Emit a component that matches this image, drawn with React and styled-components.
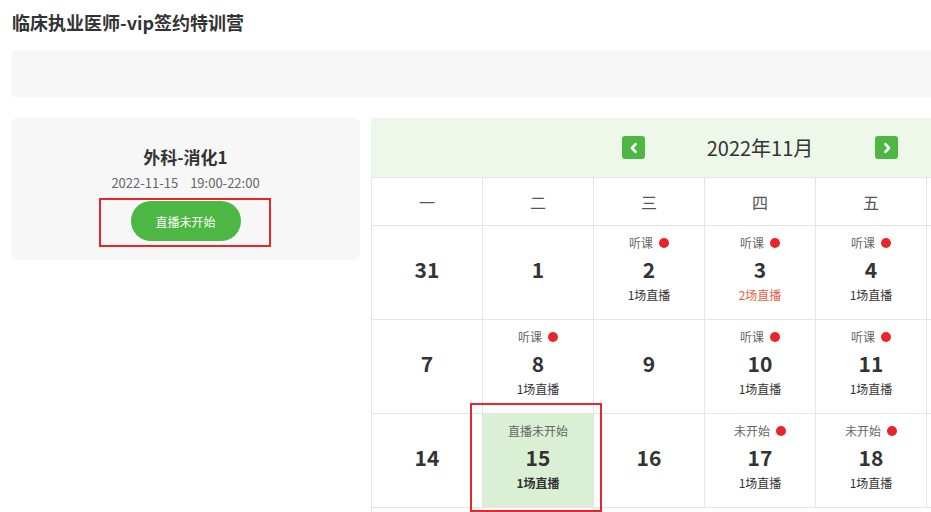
import React from 'react';
import styled, { createGlobalStyle, css } from 'styled-components';

const GlobalStyle = createGlobalStyle`
  html, body {
    margin: 0;
    padding: 0;
    overflow: hidden;
    background: #fff;
  }
  body {
    font-family: "Noto Sans CJK SC", "Noto Sans", sans-serif;
    color: #333;
  }
`;

const Page = styled.div`
  width: 931px;
  height: 512px;
  overflow: hidden;
  padding: 10px 0 0 11px;
  box-sizing: border-box;
`;

const PageTitle = styled.h1`
  margin: 0 0 0 1px;
  font-size: 18px;
  line-height: 24px;
  font-weight: 700;
  color: #333;
`;

const NoticeBar = styled.div`
  margin-top: 16px;
  height: 47px;
  width: 940px;
  background: #f7f7f7;
  border-radius: 5px;
`;

const Main = styled.div`
  display: flex;
  align-items: flex-start;
  gap: 11px;
  margin-top: 21px;
`;

const LiveCard = styled.div`
  flex: none;
  width: 349px;
  height: 142px;
  box-sizing: border-box;
  padding-top: 27px;
  background: #f7f7f7;
  border-radius: 6px;
  display: flex;
  flex-direction: column;
  align-items: center;
`;

const LiveName = styled.div`
  font-size: 17px;
  line-height: 24px;
  font-weight: 700;
  color: #333;
`;

const LiveTime = styled.div`
  margin-top: 5px;
  font-size: 13px;
  line-height: 18px;
  color: #666;

  span + span {
    margin-left: 12px;
  }
`;

const Highlight = styled.div`
  margin: 6px 2px 0 0;
  border: 2px solid #e8262a;
  padding: 1px 28px 4px 30px;
`;

const LiveButton = styled.button`
  display: block;
  width: 110px;
  height: 40px;
  border: none;
  border-radius: 20px;
  background: #4cb843;
  color: #fff;
  font-family: inherit;
  font-size: 12px;
  cursor: pointer;
`;

const Calendar = styled.div`
  flex: none;
  width: 778px;
`;

const CalHeader = styled.div`
  height: 59px;
  background: #edf7ea;
  display: flex;
  align-items: center;
  justify-content: center;
  gap: 60px;
`;

const ArrowBtn = styled.button`
  width: 23px;
  height: 23px;
  padding: 0;
  border: none;
  border-radius: 3px;
  background: #4cb843;
  display: flex;
  align-items: center;
  justify-content: center;
  cursor: pointer;
`;

const MonthTitle = styled.div`
  font-size: 20px;
  line-height: 28px;
  color: #333;
  width: 110px;
  text-align: center;
`;

const Grid = styled.div`
  display: grid;
  grid-template-columns: repeat(7, 111px);
  border-left: 1px solid #e5e5e5;
  border-top: 1px solid #e5e5e5;
`;

const WeekCell = styled.div`
  height: 48px;
  box-sizing: border-box;
  border-right: 1px solid #e5e5e5;
  border-bottom: 1px solid #e5e5e5;
  display: flex;
  align-items: center;
  justify-content: center;
  font-size: 16px;
  color: #555;
`;

const DayCell = styled.div`
  position: relative;
  height: 94px;
  box-sizing: border-box;
  padding-top: 8px;
  border-right: 1px solid #e5e5e5;
  border-bottom: 1px solid #e5e5e5;
  display: flex;
  flex-direction: column;
  align-items: center;
  background: ${(p) => (p.$active ? '#d9f0d4' : '#fff')};

  ${(p) =>
    p.$active &&
    css`
      z-index: 1;

      &::after {
        content: '';
        position: absolute;
        left: -13px;
        right: -9px;
        top: -11px;
        bottom: -5px;
        border: 2px solid #e8262a;
        pointer-events: none;
      }
    `}
`;

const DayLabel = styled.div`
  height: 18px;
  display: flex;
  align-items: center;
  gap: 6px;
  font-size: 12px;
  line-height: 18px;
  color: #666;
`;

const Dot = styled.span`
  width: 10px;
  height: 10px;
  border-radius: 50%;
  background: #e8262a;
`;

const DayNum = styled.div`
  height: 26px;
  margin-top: 4px;
  font-size: 21px;
  line-height: 26px;
  font-weight: 700;
  color: #333;
`;

const DayLive = styled.div`
  height: 18px;
  margin-top: 4px;
  font-size: 12px;
  line-height: 18px;
  color: ${(p) => (p.$warn ? '#e8613f' : '#333')};
  font-weight: ${(p) => (p.$bold ? 700 : 400)};
`;

const ChevronLeft = () => (
  <svg width="12" height="12" viewBox="0 0 12 12">
    <path d="M7.6 2.2 L4 6 L7.6 9.8" fill="none" stroke="#fff" strokeWidth="2.6" strokeLinecap="round" strokeLinejoin="round" />
  </svg>
);

const ChevronRight = () => (
  <svg width="12" height="12" viewBox="0 0 12 12">
    <path d="M4.4 2.2 L8 6 L4.4 9.8" fill="none" stroke="#fff" strokeWidth="2.6" strokeLinecap="round" strokeLinejoin="round" />
  </svg>
);

const weekDays = ['一', '二', '三', '四', '五', '六', '日'];

const listen = { label: '听课', dot: true, live: '1场直播' };
const pending = { label: '未开始', dot: true, live: '1场直播' };

const days = [
  { n: 31 }, { n: 1 }, { n: 2, ...listen }, { n: 3, ...listen, live: '2场直播', warn: true }, { n: 4, ...listen }, { n: 5 }, { n: 6 },
  { n: 7 }, { n: 8, ...listen }, { n: 9 }, { n: 10, ...listen }, { n: 11, ...listen }, { n: 12 }, { n: 13 },
  { n: 14 }, { n: 15, label: '直播未开始', live: '1场直播', active: true }, { n: 16 }, { n: 17, ...pending }, { n: 18, ...pending }, { n: 19 }, { n: 20 },
];

const App = () => {
  return (
    <>
      <GlobalStyle />
      <Page>
        <PageTitle>临床执业医师-vip签约特训营</PageTitle>
        <NoticeBar />
        <Main>
          <LiveCard>
            <LiveName>外科-消化1</LiveName>
            <LiveTime>
              <span>2022-11-15</span>
              <span>19:00-22:00</span>
            </LiveTime>
            <Highlight>
              <LiveButton>直播未开始</LiveButton>
            </Highlight>
          </LiveCard>

          <Calendar>
            <CalHeader>
              <ArrowBtn aria-label="上个月"><ChevronLeft /></ArrowBtn>
              <MonthTitle>2022年11月</MonthTitle>
              <ArrowBtn aria-label="下个月"><ChevronRight /></ArrowBtn>
            </CalHeader>
            <Grid>
              {weekDays.map((w) => (
                <WeekCell key={w}>{w}</WeekCell>
              ))}
              {days.map((d, i) => (
                <DayCell key={i} $active={d.active}>
                  <DayLabel>
                    {d.label}
                    {d.dot && <Dot />}
                  </DayLabel>
                  <DayNum>{d.n}</DayNum>
                  <DayLive $warn={d.warn} $bold={d.active}>{d.live}</DayLive>
                </DayCell>
              ))}
              <DayCell />
            </Grid>
          </Calendar>
        </Main>
      </Page>
    </>
  );
};

export default App;
